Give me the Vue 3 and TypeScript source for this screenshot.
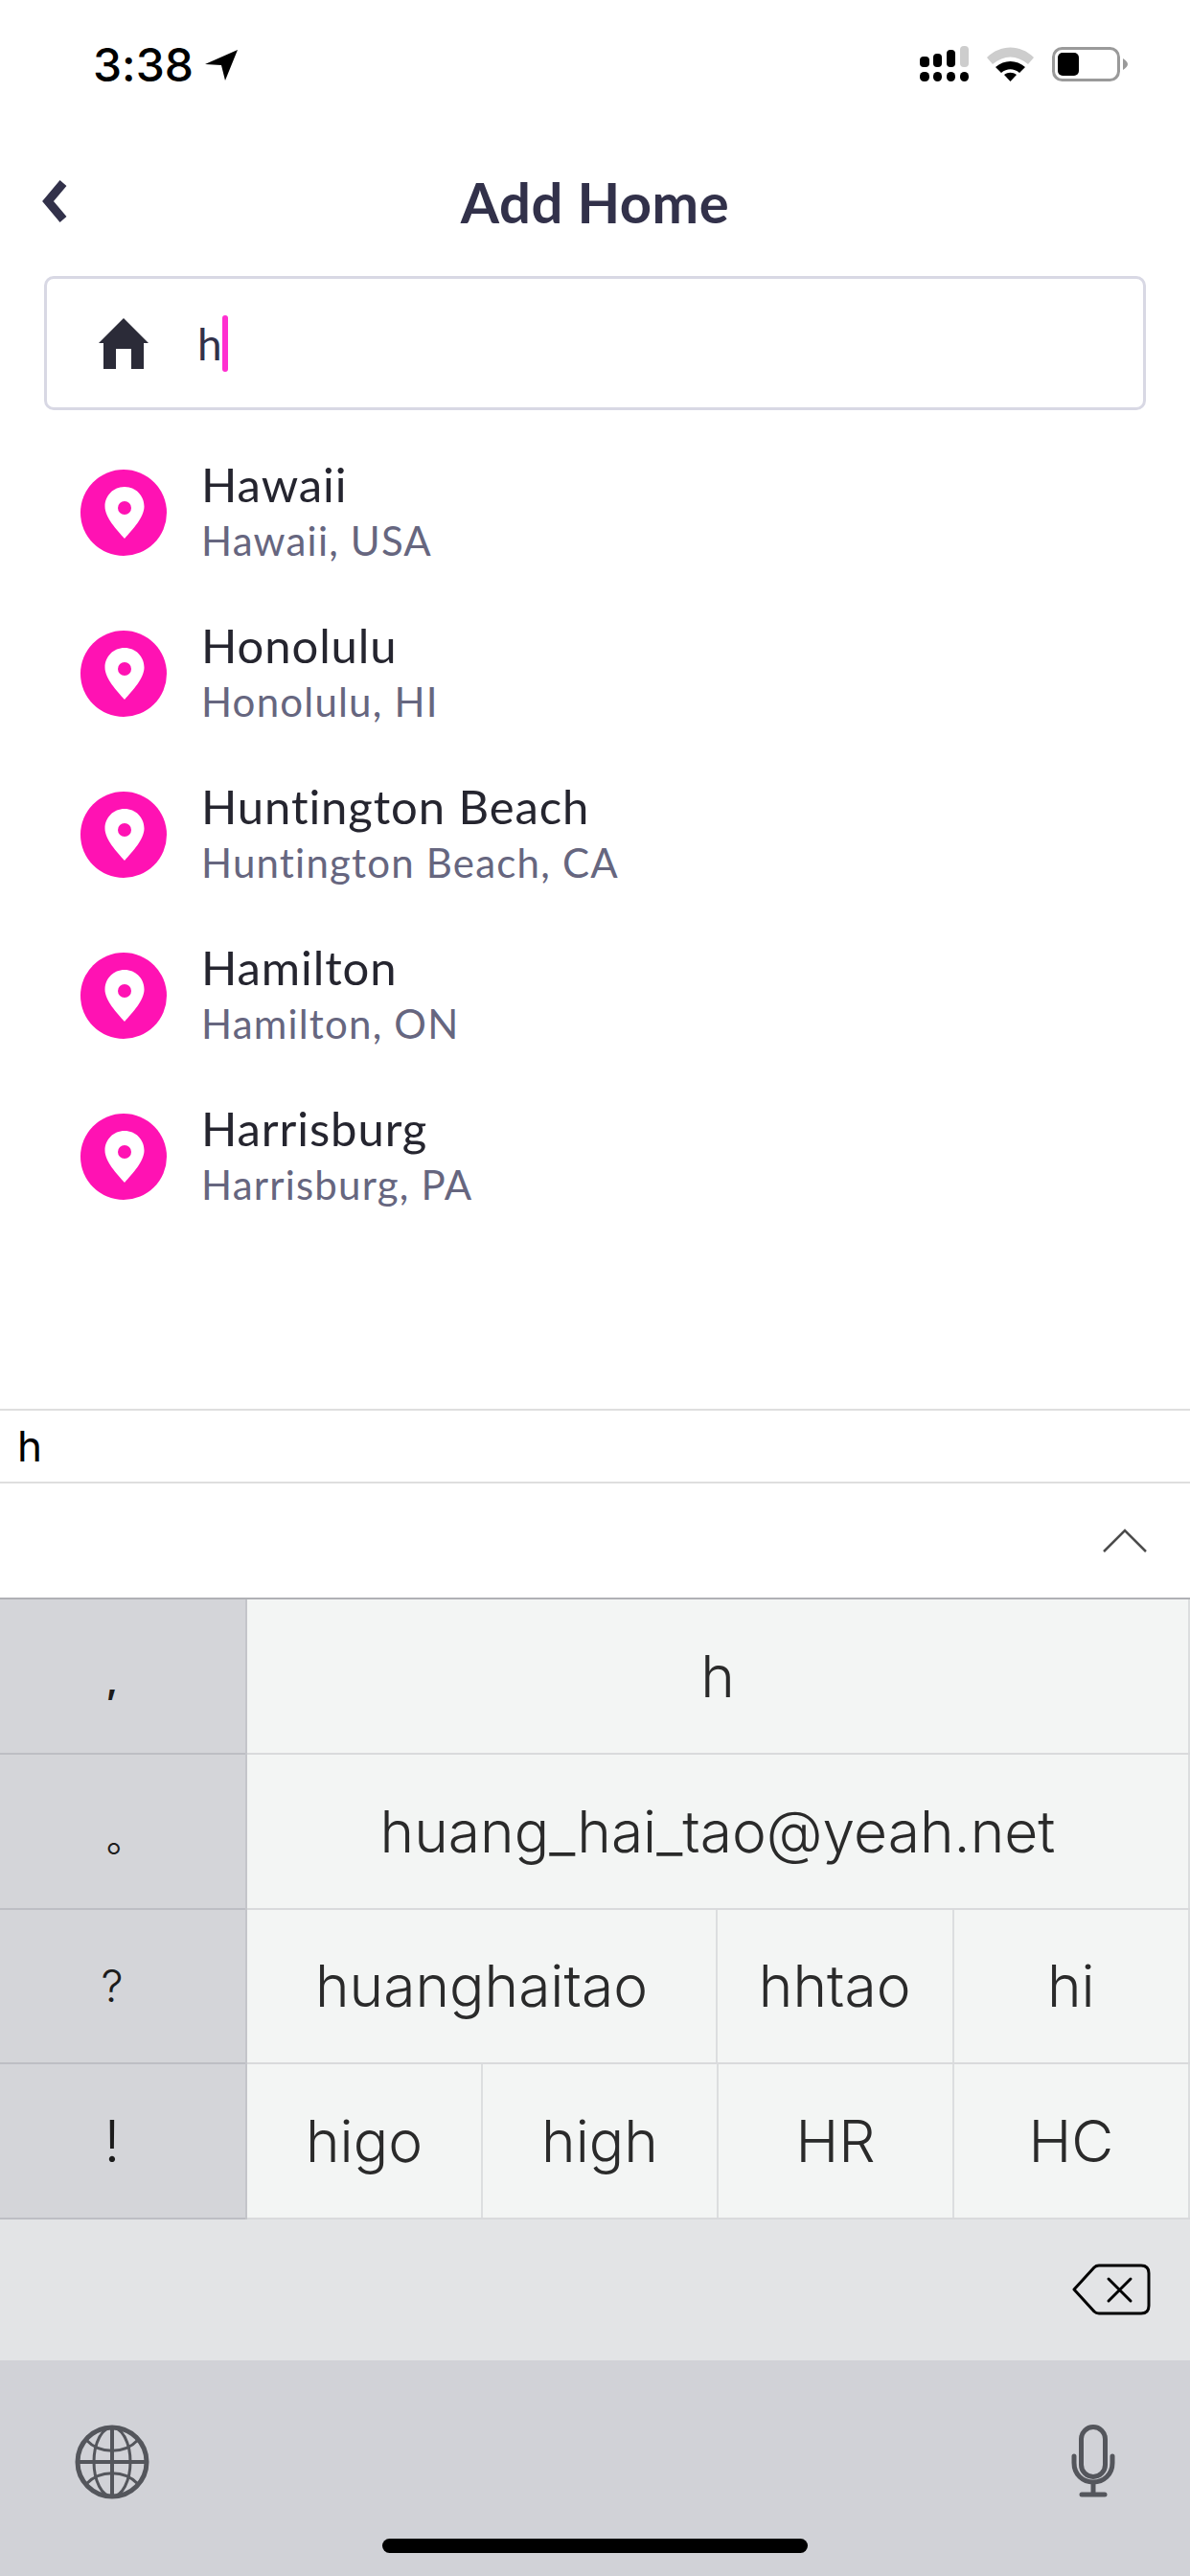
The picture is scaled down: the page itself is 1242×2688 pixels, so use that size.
<template>
  <div class="screen">
    <div class="status-bar">
      <div class="time">
        <span>3:38</span>
        <svg class="arrow" width="34" height="32" viewBox="0 0 34 32">
          <path d="M34 0 L21 32 L17 16 L0 15 Z" fill="#000" />
        </svg>
      </div>
      <div class="status-icons">
        <svg width="51" height="37" viewBox="0 0 51 37">
          <rect x="0" y="11" width="10" height="11" rx="4" />
          <rect x="14" y="8" width="9" height="14" rx="4" />
          <rect x="28" y="4" width="9" height="18" rx="4" />
          <rect x="42" y="0" width="9" height="22" rx="4" fill="#cdcdcd" />
          <rect x="0" y="27" width="10" height="10" rx="4.5" />
          <rect x="14" y="27" width="9" height="10" rx="4.5" />
          <rect x="28" y="27" width="9" height="10" rx="4.5" />
          <rect x="42" y="27" width="9" height="10" rx="4.5" />
        </svg>
        <svg width="49" height="36" viewBox="0 0 49 36">
          <path d="M0 11 C14 -3 35 -3 49 11 L43 18 C31 8 18 8 6 18 Z" fill="#cdcdcd" />
          <path d="M9 21 C18 13 31 13 40 21 L34 27 C28 22 21 22 15 27 Z" />
          <path d="M18 29 C22 26 27 26 31 29 L24.5 36 Z" />
        </svg>
        <svg width="79" height="36" viewBox="0 0 79 36">
          <rect x="1.5" y="1.5" width="68" height="33" rx="9" fill="none" stroke="#9a9a9a" stroke-width="3" />
          <rect x="6" y="6" width="22" height="24" rx="5" />
          <path d="M74 12 C77 14 79 16 79 18 C79 20 77 22 74 24 Z" fill="#9a9a9a" />
        </svg>
      </div>
    </div>

    <div class="nav">
      <svg class="back" width="26" height="44" viewBox="0 0 26 44">
        <path d="M22 3 L6 22 L22 41" fill="none" stroke="#32314a" stroke-width="9" />
      </svg>
      <div class="nav-title">Add Home</div>
    </div>

    <div class="search">
      <svg class="home" width="52" height="53" viewBox="0 0 52 53">
        <path d="M26 0 L52 26 H47 V53 H34 V32 H18 V53 H5 V26 H0 Z" fill="#2b2b38" />
      </svg>
      <span class="typed">h</span>
      <span class="caret"></span>
    </div>

    <div class="results">
      <div v-for="place in places" :key="place.name" class="result">
        <svg class="pin" width="90" height="90" viewBox="0 0 90 90">
          <circle cx="45" cy="45" r="45" fill="#ff12b3" />
          <path d="M46 72 C38 63 25.5 50 25.5 38.5 C25.5 27 34.5 18 46 18 C57.5 18 66.5 27 66.5 38.5 C66.5 50 54 63 46 72 Z" fill="#fff" />
          <circle cx="46" cy="40" r="7" fill="#ff12b3" />
        </svg>
        <div class="result-text">
          <div class="result-name">{{ place.name }}</div>
          <div class="result-sub">{{ place.sub }}</div>
        </div>
      </div>
    </div>

    <div class="composing">h</div>
    <div class="expand-bar">
      <svg width="46" height="25" viewBox="0 0 46 25">
        <path d="M1 24 L23 2 L45 24" fill="none" stroke="#4c4c4c" stroke-width="2.5" />
      </svg>
    </div>

    <div class="candidates">
      <div class="punct">
        <div v-for="p in punctuation" :key="p.label" class="punct-key">
          <span :class="p.cls">{{ p.label }}</span>
        </div>
      </div>
      <div class="words">
        <div v-for="(row, i) in wordRows" :key="i" class="word-row">
          <div
            v-for="word in row"
            :key="word.text"
            class="word"
            :style="{ flexGrow: word.span }"
          >
            {{ word.text }}
          </div>
        </div>
      </div>
    </div>

    <div class="delete-row">
      <svg width="82" height="54" viewBox="0 0 82 54">
        <path d="M2 27 L23 4 Q25 2 28 2 H72 Q80 2 80 10 V44 Q80 52 72 52 H28 Q25 52 23 50 Z" fill="none" stroke="#000" stroke-width="3" stroke-linejoin="round" />
        <path d="M38 16 L61 39 M61 16 L38 39" fill="none" stroke="#000" stroke-width="3" stroke-linecap="round" />
      </svg>
    </div>

    <div class="keyboard-bottom">
      <div class="kb-icons">
        <svg width="78" height="78" viewBox="0 0 78 78" fill="none" stroke="#54565c">
          <circle cx="39" cy="39" r="36" stroke-width="5" />
          <ellipse cx="39" cy="39" rx="19" ry="36" stroke-width="3" />
          <path d="M39 3 V75 M3 39 H75" stroke-width="4" />
          <path d="M12 16 C26 31 52 31 66 16 M12 62 C26 47 52 47 66 62" stroke-width="3" />
        </svg>
        <svg width="46" height="76" viewBox="0 0 46 76" fill="none" stroke="#54565c">
          <rect x="10.5" y="2.5" width="25" height="52" rx="12.5" stroke-width="5" />
          <path d="M3 33 V40 C3 52 12 60 23 60 C34 60 43 52 43 40 V33" stroke-width="5" stroke-linecap="round" />
          <path d="M23 60 V73" stroke-width="5" />
          <path d="M11 73 H35" stroke-width="5" stroke-linecap="round" />
        </svg>
      </div>
      <div class="home-bar"></div>
    </div>
  </div>
</template>

<script setup lang="ts">
const places = [
  { name: "Hawaii", sub: "Hawaii, USA" },
  { name: "Honolulu", sub: "Honolulu, HI" },
  { name: "Huntington Beach", sub: "Huntington Beach, CA" },
  { name: "Hamilton", sub: "Hamilton, ON" },
  { name: "Harrisburg", sub: "Harrisburg, PA" },
];

const punctuation = [
  { label: ",", cls: "p-comma" },
  { label: "。", cls: "p-stop" },
  { label: "?", cls: "p-question" },
  { label: "!", cls: "p-bang" },
];

const wordRows = [
  [{ text: "h", span: 1 }],
  [{ text: "huang_hai_tao@yeah.net", span: 1 }],
  [
    { text: "huanghaitao", span: 2 },
    { text: "hhtao", span: 1 },
    { text: "hi", span: 1 },
  ],
  [
    { text: "higo", span: 1 },
    { text: "high", span: 1 },
    { text: "HR", span: 1 },
    { text: "HC", span: 1 },
  ],
];
</script>

<style scoped>
.screen {
  width: 1242px;
  height: 2688px;
  background: #fff;
  display: flex;
  flex-direction: column;
  overflow: hidden;
  font-family: "Lato", sans-serif;
  font-variant-ligatures: none;
}
.status-bar {
  height: 136px;
  display: flex;
  justify-content: space-between;
  align-items: flex-start;
  padding: 48px 65px 0 97px;
  box-sizing: border-box;
}
.time {
  display: flex;
  align-items: center;
  gap: 12px;
  font-family: "Inter", sans-serif;
  font-size: 48px;
  font-weight: 500;
  line-height: 40px;
  color: #000;
}
.status-icons {
  display: flex;
  align-items: center;
  gap: 19px;
}
.nav {
  height: 148px;
  position: relative;
  display: flex;
  align-items: center;
  justify-content: center;
}
.back {
  position: absolute;
  left: 44px;
  top: 52px;
}
.nav-title {
  font-size: 58px;
  font-weight: 700;
  letter-spacing: 0.5px;
  color: #32314a;
}
.search {
  height: 140px;
  margin: 4px 46px 0;
  border: 3px solid #d8d8e4;
  border-radius: 10px;
  box-sizing: border-box;
  display: flex;
  align-items: center;
  padding-left: 54px;
}
.home {
  margin-right: 51px;
}
.typed {
  font-size: 46px;
  color: #32314a;
}
.caret {
  width: 6px;
  height: 59px;
  border-radius: 3px;
  background: #ff2fd0;
}
.results {
  flex: 1;
  padding-top: 23px;
}
.result {
  height: 168px;
  display: flex;
  align-items: center;
  padding-left: 84px;
  gap: 36px;
}
.result-name {
  font-size: 49px;
  line-height: 58px;
  letter-spacing: 0.9px;
  color: #25252f;
}
.result-sub {
  font-size: 42px;
  line-height: 60px;
  letter-spacing: 1.2px;
  color: #66667f;
}
.composing {
  height: 78px;
  box-sizing: border-box;
  border-top: 2px solid #dedede;
  border-bottom: 2px solid #dedede;
  padding-left: 18px;
  font-family: "Inter", sans-serif;
  font-size: 44px;
  line-height: 74px;
  color: #000;
}
.expand-bar {
  height: 119px;
  display: flex;
  align-items: center;
  justify-content: flex-end;
  padding-right: 45px;
  box-sizing: border-box;
}
.candidates {
  height: 649px;
  display: flex;
  border-top: 2px solid #b0b1b5;
  box-sizing: border-box;
  font-family: "Inter", sans-serif;
}
.punct {
  width: 258px;
  background: #d4d5d9;
  border-right: 2px solid #c4c5ca;
  box-sizing: border-box;
  display: flex;
  flex-direction: column;
}
.punct-key {
  flex: 1;
  display: flex;
  align-items: center;
  justify-content: center;
  padding-right: 22px;
  color: #1c1c1c;
  border-bottom: 2px solid #bdbec4;
}
.p-comma {
  font-size: 36px;
  font-weight: 700;
  padding-top: 10px;
}
.p-stop {
  font-family: "Noto Sans CJK SC", sans-serif;
  font-size: 40px;
  padding-left: 28px;
  padding-top: 8px;
}
.p-question {
  font-size: 46px;
  font-weight: 300;
}
.p-bang {
  font-size: 60px;
  font-weight: 300;
}
.words {
  flex: 1;
  display: flex;
  flex-direction: column;
  background: #f3f5f4;
}
.word-row {
  flex: 1;
  display: flex;
  border-bottom: 2px solid #d9dadc;
}
.word {
  flex-basis: 0;
  display: flex;
  align-items: center;
  justify-content: center;
  font-size: 60.5px;
  font-weight: 300;
  color: #2a2a2a;
  border-right: 2px solid #dcdedf;
}
.delete-row {
  height: 147px;
  background: #e3e4e6;
  display: flex;
  align-items: flex-start;
  justify-content: flex-end;
  padding: 46px 41px 0 0;
  box-sizing: border-box;
}
.keyboard-bottom {
  flex-shrink: 0;
  height: 225px;
  background: #d1d2d7;
  position: relative;
}
.kb-icons {
  display: flex;
  justify-content: space-between;
  align-items: flex-start;
  padding: 67px 78px 0 78px;
}
.home-bar {
  position: absolute;
  left: 399px;
  top: 186px;
  width: 444px;
  height: 15px;
  border-radius: 8px;
  background: #000;
}
</style>

<style>
html,
body {
  margin: 0;
  padding: 0;
}
</style>
